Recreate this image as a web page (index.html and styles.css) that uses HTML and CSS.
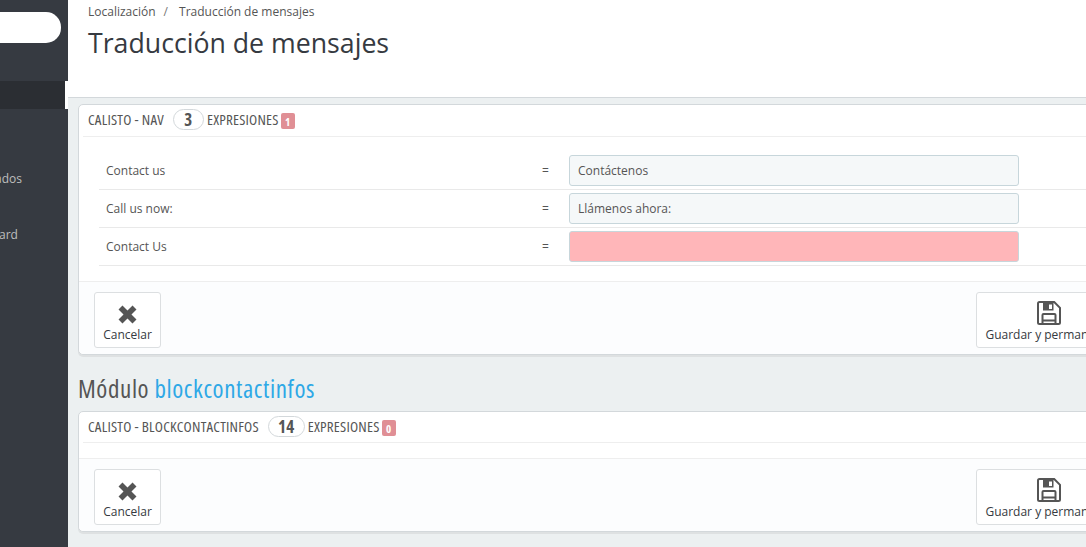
FILE: index.html
```html
<!DOCTYPE html>
<html lang="es">
<head>
<meta charset="utf-8">
<title>Traducción de mensajes</title>
<link rel="stylesheet" href="styles.css">
</head>
<body>
<div class="app">
  <nav class="sidebar">
    <div class="search"></div>
    <div class="nav-active"></div>
    <div class="nav-item first">ados</div>
    <div class="nav-item second">ard</div>
  </nav>
  <main class="main">
    <header class="page-head">
      <div class="crumbs"><span>Localización</span><span class="sep">/</span><span>Traducción de mensajes</span></div>
      <h1>Traducción de mensajes</h1>
    </header>
    <div class="content">
      <section class="panel">
        <div class="panel-title"><span class="mod">CALISTO - NAV</span><span class="count">3</span><span>EXPRESIONES</span><span class="badge">1</span></div>
        <div class="rows">
          <div class="row"><span class="src">Contact us</span><span class="eq">=</span><div class="field">Contáctenos</div></div>
          <div class="row"><span class="src">Call us now:</span><span class="eq">=</span><div class="field">Llámenos ahora:</div></div>
          <div class="row"><span class="src">Contact Us</span><span class="eq">=</span><div class="field missing"></div></div>
        </div>
        <div class="panel-foot">
          <button class="btn"><svg class="ico-x" viewBox="0 0 22 22"><path d="M5.200.6 11 6.400 16.800.6l4.600 4.600L15.600 11l5.800 5.800-4.600 4.600L11 15.600l-5.800 5.800-4.600-4.600L6.400 11 .6 5.200z"/></svg><span>Cancelar</span></button>
          <button class="btn save"><svg class="ico" viewBox="0 0 24 24"><path class="line" d="M2.500 1h14.700l5.800 5.800v14.700a1.500 1.500 0 0 1-1.500 1.500h-19A1.500 1.500 0 0 1 1 21.500v-19A1.500 1.500 0 0 1 2.500 1z"/><path fill-rule="evenodd" d="M6 2h10.500v7.500H6zm6 1.500v4.500h3V3.500z"/><path class="line" d="M5.500 23v-9a1 1 0 0 1 1-1h11a1 1 0 0 1 1 1v9M5.500 19.500h13"/></svg><span>Guardar y permanecer</span></button>
        </div>
      </section>
      <h2 class="module">Módulo <a>blockcontactinfos</a></h2>
      <section class="panel">
        <div class="panel-title short"><span class="mod">CALISTO - BLOCKCONTACTINFOS</span><span class="count wide">14</span><span>EXPRESIONES</span><span class="badge">0</span></div>
        <div class="rows empty"></div>
        <div class="panel-foot">
          <button class="btn"><svg class="ico-x" viewBox="0 0 22 22"><path d="M5.200.6 11 6.400 16.800.6l4.600 4.600L15.600 11l5.800 5.800-4.600 4.600L11 15.600l-5.800 5.800-4.600-4.600L6.400 11 .6 5.200z"/></svg><span>Cancelar</span></button>
          <button class="btn save"><svg class="ico" viewBox="0 0 24 24"><path class="line" d="M2.500 1h14.700l5.800 5.800v14.700a1.500 1.500 0 0 1-1.500 1.500h-19A1.500 1.500 0 0 1 1 21.500v-19A1.500 1.500 0 0 1 2.500 1z"/><path fill-rule="evenodd" d="M6 2h10.500v7.500H6zm6 1.500v4.500h3V3.500z"/><path class="line" d="M5.500 23v-9a1 1 0 0 1 1-1h11a1 1 0 0 1 1 1v9M5.500 19.500h13"/></svg><span>Guardar y permanecer</span></button>
        </div>
      </section>
    </div>
  </main>
</div>
</body>
</html>
```
FILE: styles.css
```css
* { box-sizing: border-box; }
html, body { margin: 0; height: 100%; overflow: hidden; }
body { font-family: "Open Sans", "Liberation Sans", sans-serif; font-size: 12px; color: #555; background: #ecf0f1; }
.app { display: flex; height: 547px; width: 1086px; overflow: hidden; }
.sidebar { flex: 0 0 68px; background: #363a41; padding-top: 12px; display: flex; flex-direction: column; align-items: flex-end; overflow: hidden; }
.search { width: 61px; height: 31px; margin-right: 7px; background: #fff; border-radius: 0 15px 15px 0; }
.nav-active { width: 68px; height: 28px; margin-top: 38px; background: #2b2e33; border-right: 3px solid #fff; }
.nav-item { color: #bebebe; font-size: 12px; line-height: 16px; width: 68px; white-space: nowrap; }
.nav-item.first { margin-top: 62px; text-indent: -5px; }
.nav-item.second { margin-top: 40px; text-indent: -1px; }
.main { flex: 0 0 auto; width: 1100px; display: flex; flex-direction: column; }
.page-head { height: 98px; background: #fff; border-bottom: 1px solid #d3d8db; padding: 4px 0 0 20px; }
.crumbs { display: flex; gap: 8px; font-size: 12px; line-height: 16px; color: #555; }
.sep { color: #777; margin-right: 3px; }
.page-head h1 { margin: 5px 0 0; font-size: 26.7px; line-height: 36px; font-weight: 400; color: #363a41; }
.content { padding: 6px 0 0 10px; }
.panel { width: 1060px; background: #fff; border: 1px solid #d3d8db; border-radius: 5px; box-shadow: 0 2px 0 rgba(0,0,0,.06); }
.panel-title { display: flex; align-items: center; height: 32px; margin: 0 0 0 4px; padding: 0 0 3px 5px; border-bottom: 1px solid #eee; font-size: 15px; font-stretch: 75%; letter-spacing: .2px; color: #555; }
.panel-title.short { height: 31px; padding-bottom: 2px; }
.mod { margin-right: 9px; }
.count { display: flex; align-items: center; justify-content: center; width: 31px; height: 21px; margin: 0 3px 0 0; border: 1px solid #d3d8db; border-radius: 11px; font-size: 17px; font-weight: 700; }
.count.wide { width: 37px; }
.badge { display: flex; align-items: center; justify-content: center; width: 14px; height: 16px; margin: 4px 0 0 2px; background: #e08f95; border-radius: 2px; color: #fff; font-size: 11px; font-weight: 700; letter-spacing: 0; }
.rows { padding: 15px 0 15px 20px; }
.rows.empty { height: 15px; padding: 0; }
.row { display: grid; grid-template-columns: 436px 27px 450px; align-items: center; height: 38px; border-bottom: 1px solid #e9e9e9; padding: 0 0 0 7px; }
.field { height: 31px; background: #f5f8f9; border: 1px solid #c7d6db; border-radius: 3px; padding: 0 8px; display: flex; align-items: center; font-size: 12px; }
.field.missing { background: #ffb6b9; }
.panel-foot { display: flex; justify-content: space-between; padding: 10px 15px 6px; background: #fcfdfe; border-top: 1px solid #eee; border-radius: 0 0 5px 5px; height: 73px; }
.btn { width: 67px; height: 56px; padding: 8px 0 0; display: flex; flex-direction: column; align-items: center; background: #fff; border: 1px solid #dcdfe1; border-radius: 3px; color: #363a41; font-family: "Open Sans", "Liberation Sans", sans-serif; font-size: 12px; line-height: 16px; }
.btn span { margin-top: 2px; white-space: nowrap; }
.ico { width: 24px; height: 24px; fill: #555; display: block; flex: none; }
.ico .line { fill: none; stroke: #555; stroke-width: 2; }
.ico-x { width: 19px; height: 19px; margin: 4px 0 1px; fill: #555; display: block; flex: none; }
.save { width: 146px; }
.module { margin: 20px 0 9px; font-size: 25px; font-stretch: 75%; letter-spacing: .6px; line-height: 27px; font-weight: 400; color: #555; }
.module a { color: #2ea8e6; }
```
